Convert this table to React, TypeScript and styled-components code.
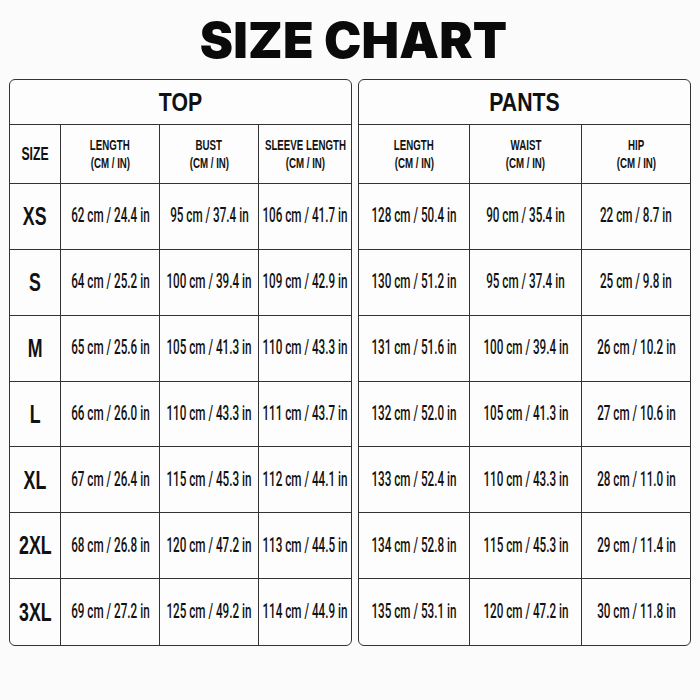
import React from "react";
import styled, { createGlobalStyle } from "styled-components";

const Global = createGlobalStyle`
  html, body { margin: 0; padding: 0; background: #fbfbfb; }
  * { box-sizing: border-box; }
`;

const Page = styled.div`
  width: 700px;
  height: 700px;
  background: #fbfbfb;
  display: flex;
  flex-direction: column;
  font-family: "Liberation Sans", Arial, sans-serif;
  color: #111;
`;

const Title = styled.h1`
  margin: 0;
  height: 79px;
  display: flex;
  align-items: center;
  justify-content: center;
  padding: 1px 0 0 7px;
  font-family: "Inter", "Liberation Sans", sans-serif;
  font-weight: 900;
  font-size: 50px;
  letter-spacing: 0.2px;
  color: #0a0a0a;
`;

const Tables = styled.div`
  display: flex;
  gap: 6px;
  padding: 0 9px;
`;

const Table = styled.div<{ $w: number; $cols: string }>`
  width: ${(p) => p.$w}px;
  height: 567px;
  border: 1.5px solid #333;
  border-radius: 6px;
  overflow: hidden;
  background: #fdfdfd;
  display: grid;
  grid-template-columns: ${(p) => p.$cols};
  grid-template-rows: 45px 59px repeat(7, 1fr);
`;

const Cell = styled.div<{ $last?: boolean; $bottom?: boolean }>`
  display: flex;
  flex-direction: column;
  align-items: center;
  justify-content: center;
  min-width: 0;
  border-right: ${(p) => (p.$last ? "none" : "1px solid #333")};
  border-bottom: ${(p) => (p.$bottom ? "none" : "1px solid #333")};
  white-space: nowrap;
`;

const Head = styled(Cell)`
  grid-column: 1 / -1;
  border-right: none;
`;

const Cond = styled.span<{ $s: number; $size: number; $bold?: boolean; $lh?: number }>`
  display: inline-block;
  margin: 0 -60px;
  font-size: ${(p) => p.$size}px;
  font-weight: ${(p) => (p.$bold ? 700 : 400)};
  line-height: ${(p) => (p.$lh ? `${p.$lh}px` : "1.15")};
  transform: scaleX(${(p) => p.$s});
  text-align: center;
  white-space: nowrap;
`;

const Value = styled(Cond)`
  font-family: "Roboto", "Liberation Sans", sans-serif;
  font-weight: 500;
  color: #121212;
`;

const sizes = ["XS", "S", "M", "L", "XL", "2XL", "3XL"];

const top = [
  ["62 cm / 24.4 in", "95 cm / 37.4 in", "106 cm / 41.7 in"],
  ["64 cm / 25.2 in", "100 cm / 39.4 in", "109 cm / 42.9 in"],
  ["65 cm / 25.6 in", "105 cm / 41.3 in", "110 cm / 43.3 in"],
  ["66 cm / 26.0 in", "110 cm / 43.3 in", "111 cm / 43.7 in"],
  ["67 cm / 26.4 in", "115 cm / 45.3 in", "112 cm / 44.1 in"],
  ["68 cm / 26.8 in", "120 cm / 47.2 in", "113 cm / 44.5 in"],
  ["69 cm / 27.2 in", "125 cm / 49.2 in", "114 cm / 44.9 in"],
];

const pants = [
  ["128 cm / 50.4 in", "90 cm / 35.4 in", "22 cm / 8.7 in"],
  ["130 cm / 51.2 in", "95 cm / 37.4 in", "25 cm / 9.8 in"],
  ["131 cm / 51.6 in", "100 cm / 39.4 in", "26 cm / 10.2 in"],
  ["132 cm / 52.0 in", "105 cm / 41.3 in", "27 cm / 10.6 in"],
  ["133 cm / 52.4 in", "110 cm / 43.3 in", "28 cm / 11.0 in"],
  ["134 cm / 52.8 in", "115 cm / 45.3 in", "29 cm / 11.4 in"],
  ["135 cm / 53.1 in", "120 cm / 47.2 in", "30 cm / 11.8 in"],
];

function ColHead({ label, last }: { label: string; last?: boolean }) {
  return (
    <Cell $last={last}>
      <Cond $s={0.67} $size={14.5} $bold $lh={18}>{label}</Cond>
      <Cond $s={0.67} $size={14.5} $bold $lh={18}>(CM / IN)</Cond>
    </Cell>
  );
}

export default function App() {
  return (
    <Page>
      <Global />
      <Title>SIZE CHART</Title>
      <Tables>
        <Table $w={343} $cols="51px 99px 99px 1fr">
          <Head>
            <Cond $s={0.85} $size={25} $bold>TOP</Cond>
          </Head>
          <Cell>
            <Cond $s={0.68} $size={18} $bold>SIZE</Cond>
          </Cell>
          <ColHead label="LENGTH" />
          <ColHead label="BUST" />
          <ColHead label="SLEEVE LENGTH" last />
          {sizes.map((s, i) => (
            <React.Fragment key={s}>
              <Cell $bottom={i === 6}>
                <Cond $s={0.67} $size={26.5} $bold>{s}</Cond>
              </Cell>
              {top[i].map((v, j) => (
                <Cell key={j} $bottom={i === 6} $last={j === 2}>
                  <Value $s={0.6} $size={19.5}>{v}</Value>
                </Cell>
              ))}
            </React.Fragment>
          ))}
        </Table>
        <Table $w={333} $cols="111px 112px 1fr">
          <Head>
            <Cond $s={0.85} $size={25} $bold>PANTS</Cond>
          </Head>
          <ColHead label="LENGTH" />
          <ColHead label="WAIST" />
          <ColHead label="HIP" last />
          {pants.map((row, i) => (
            <React.Fragment key={i}>
              {row.map((v, j) => (
                <Cell key={j} $bottom={i === 6} $last={j === 2}>
                  <Value $s={0.6} $size={19.5}>{v}</Value>
                </Cell>
              ))}
            </React.Fragment>
          ))}
        </Table>
      </Tables>
    </Page>
  );
}
